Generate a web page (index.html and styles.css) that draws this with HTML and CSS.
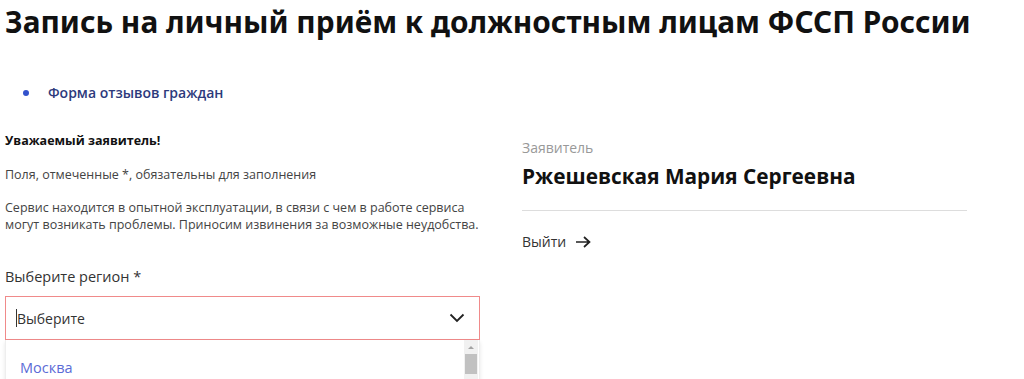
FILE: index.html
```html
<!DOCTYPE html>
<html lang="ru">
<head>
    <meta charset="UTF-8">
    <title>Запись на личный приём</title>
    <link rel="stylesheet" href="styles.css">
</head>
<body>
    <div class="page">
        <h1 class="page-title">Запись на личный приём к должностным лицам ФССП России</h1>

        <ul class="links">
            <li><a href="#">Форма отзывов граждан</a></li>
        </ul>

        <div class="columns">
            <section class="form-col">
                <p class="note-title">Уважаемый заявитель!</p>
                <p class="note">Поля, отмеченные *, обязательны для заполнения</p>
                <p class="note">Сервис находится в опытной эксплуатации, в связи с чем в работе сервиса могут возникать проблемы. Приносим извинения за возможные неудобства.</p>

                <label class="field-label">Выберите регион *</label>
                <div class="select">
                    <div class="select-box">
                        <span class="caret"></span>
                        <span class="select-value">Выберите</span>
                        <svg class="chevron" width="16" height="10" viewBox="0 0 16 10">
                            <path d="M1.5 1.5 L8 8 L14.5 1.5" fill="none" stroke="#222" stroke-width="1.8"/>
                        </svg>
                    </div>
                    <div class="select-list">
                        <div class="option">Москва</div>
                        <div class="scrollbar">
                            <span class="scroll-arrow"></span>
                            <span class="scroll-thumb"></span>
                        </div>
                    </div>
                </div>
            </section>

            <aside class="user-col">
                <div class="user-label">Заявитель</div>
                <div class="user-name">Ржешевская Мария Сергеевна</div>
                <hr class="divider">
                <a class="logout" href="#">
                    Выйти
                    <svg class="arrow" width="15" height="12" viewBox="0 0 15 12">
                        <path d="M0 6 H13 M8 1 L13.5 6 L8 11" fill="none" stroke="#222" stroke-width="1.7"/>
                    </svg>
                </a>
            </aside>
        </div>
    </div>
</body>
</html>
```

FILE: styles.css
```css
:root {
    --text: #222;
    --muted: #444;
    --link: #2d3a7c;
    --accent: #3352cc;
}

* {
    margin: 0;
    padding: 0;
    box-sizing: border-box;
}

body {
    font-family: 'Open Sans', sans-serif;
    color: var(--text);
    background: #fff;
    overflow: hidden;
}

.page {
    padding: 4px 5px 0;
}

.page-title {
    font-family: 'Noto Sans', sans-serif;
    font-weight: 700;
    font-size: 29.8px;
    line-height: 36px;
    color: #111;
}

.links {
    list-style: none;
    margin-top: 43px;
    padding-left: 18px;
}

.links li {
    display: flex;
    align-items: center;
    gap: 19px;
}

.links li::before {
    content: "";
    width: 6px;
    height: 6px;
    border-radius: 50%;
    background: var(--accent);
}

.links a {
    color: var(--link);
    font-size: 14px;
    font-weight: 600;
    text-decoration: none;
}

.columns {
    display: grid;
    grid-template-columns: 475px 445px;
    gap: 42px;
    margin-top: 30px;
}

.note-title {
    font-size: 12.5px;
    font-weight: 700;
    line-height: 18px;
    color: #111;
}

.note {
    font-size: 12.5px;
    line-height: 17px;
    color: var(--muted);
    margin-top: 16px;
}

.field-label {
    display: block;
    font-size: 14.5px;
    color: #333;
    margin-top: 34px;
}

.select {
    margin-top: 10px;
}

.select-box {
    height: 44px;
    border: 1px solid #f08a8a;
    display: flex;
    align-items: center;
    padding: 0 14px 0 10px;
}

.caret {
    width: 1px;
    height: 18px;
    background: #333;
}

.select-value {
    font-size: 14px;
    color: #333;
    flex: 1;
}

.select-list {
    position: relative;
    height: 60px;
    border-left: 1px solid #eee;
    border-right: 1px solid #eee;
    box-shadow: 0 2px 4px rgba(0, 0, 0, 0.1);
}

.option {
    padding: 18px 14px;
    font-size: 14.5px;
    color: #5b6bd6;
}

.scrollbar {
    position: absolute;
    top: 0;
    right: 1px;
    width: 14px;
    height: 100%;
    background: #f1f1f1;
}

.scroll-arrow {
    position: absolute;
    top: 6px;
    left: 4px;
    border-left: 3px solid transparent;
    border-right: 3px solid transparent;
    border-bottom: 3px solid #a3a3a3;
}

.scroll-thumb {
    position: absolute;
    top: 14px;
    left: 1px;
    width: 12px;
    height: 20px;
    background: #c1c1c1;
}

.user-col {
    padding-top: 6px;
}

.user-label {
    font-size: 14px;
    color: #999;
}

.user-name {
    font-size: 20.8px;
    font-weight: 700;
    color: #111;
    margin-top: 5px;
}

.divider {
    border: none;
    border-top: 1px solid #ddd;
    margin-top: 20px;
}

.logout {
    display: inline-flex;
    align-items: center;
    gap: 10px;
    margin-top: 21px;
    font-size: 14px;
    color: #333;
    text-decoration: none;
}
```
